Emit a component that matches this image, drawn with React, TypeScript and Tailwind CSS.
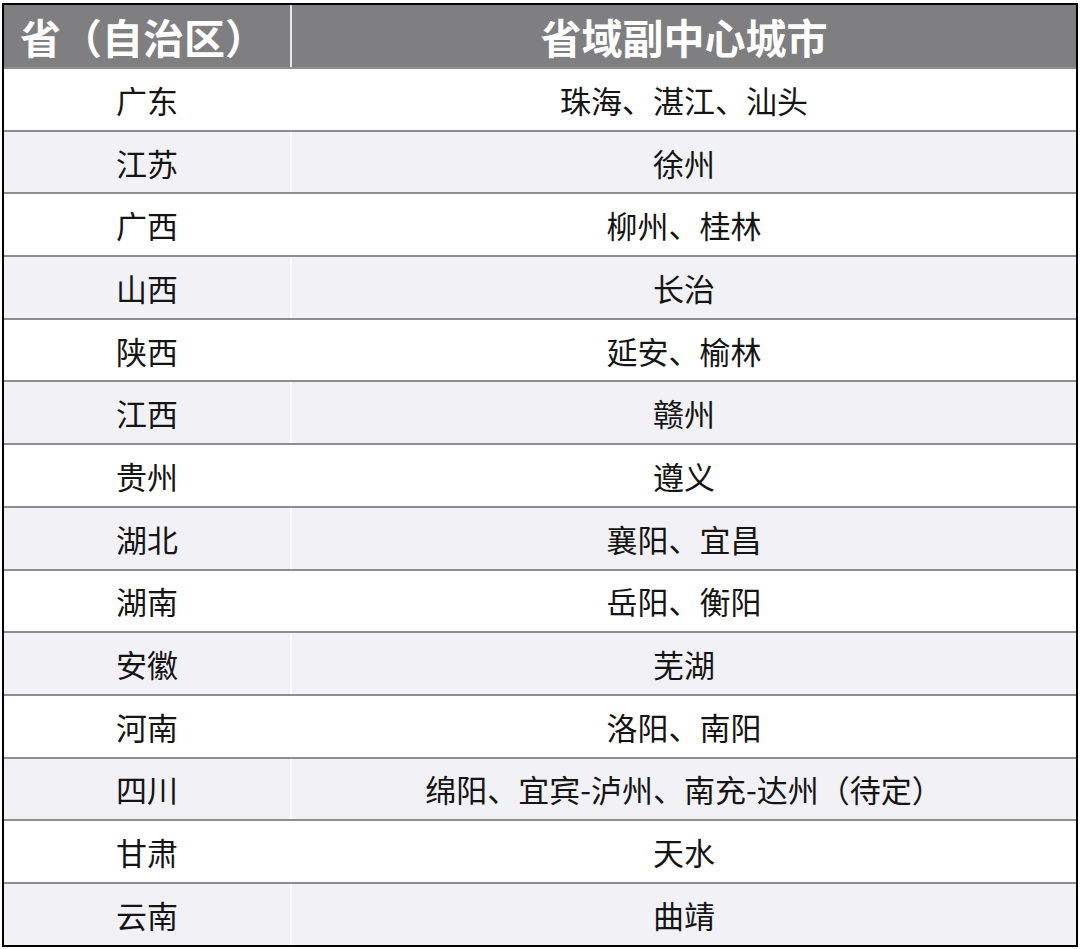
const rows: [string, string][] = [
  ["广东", "珠海、湛江、汕头"],
  ["江苏", "徐州"],
  ["广西", "柳州、桂林"],
  ["山西", "长治"],
  ["陕西", "延安、榆林"],
  ["江西", "赣州"],
  ["贵州", "遵义"],
  ["湖北", "襄阳、宜昌"],
  ["湖南", "岳阳、衡阳"],
  ["安徽", "芜湖"],
  ["河南", "洛阳、南阳"],
  ["四川", "绵阳、宜宾-泸州、南充-达州（待定）"],
  ["甘肃", "天水"],
  ["云南", "曲靖"],
];

export default function App() {
  return (
    <div
      className="w-[1080px] h-[949px] bg-white pt-[3px] pl-[2px]"
      style={{ fontFamily: '"Noto Sans CJK SC", "Noto Sans", sans-serif' }}
    >
      <div className="w-[1076px] border-2 border-black">
        <div className="flex h-[62px] bg-[#7f7e80] text-white font-bold text-[41px] leading-none">
          <div className="w-[288px] flex items-center pl-[16px] border-r-2 border-[#e8e8ea]">
            省（自治区）
          </div>
          <div className="flex-1 flex items-center justify-center">省域副中心城市</div>
        </div>
        {rows.map(([prov, cities], i) => (
          <div
            key={prov}
            className={
              "flex h-[62.7px] border-t-2 border-[#8e8d90] text-[31px] leading-none text-[#151515] " +
              (i % 2 === 0 ? "bg-white" : "bg-[#f2f1f5]")
            }
          >
            <div className="w-[288px] flex items-center justify-center border-r-2 border-white">
              {prov}
            </div>
            <div className="flex-1 flex items-center justify-center">{cities}</div>
          </div>
        ))}
      </div>
    </div>
  );
}
